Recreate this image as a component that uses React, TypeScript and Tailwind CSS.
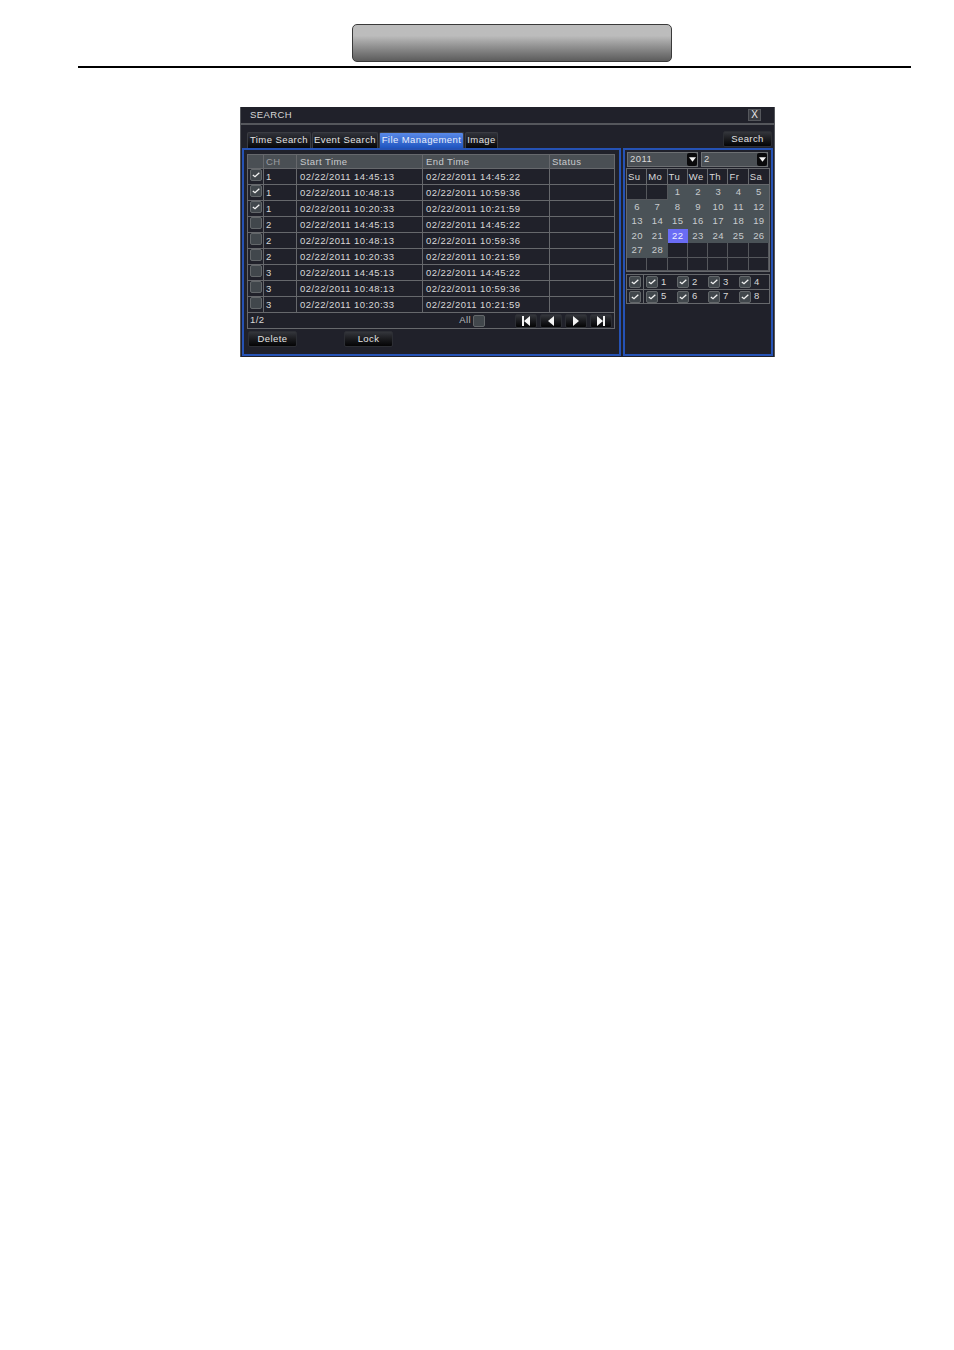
const font = "font-['Liberation_Sans',Arial,sans-serif]";

const rows = [
  ["1", "02/22/2011 14:45:13", "02/22/2011 14:45:22", true],
  ["1", "02/22/2011 10:48:13", "02/22/2011 10:59:36", true],
  ["1", "02/22/2011 10:20:33", "02/22/2011 10:21:59", true],
  ["2", "02/22/2011 14:45:13", "02/22/2011 14:45:22", false],
  ["2", "02/22/2011 10:48:13", "02/22/2011 10:59:36", false],
  ["2", "02/22/2011 10:20:33", "02/22/2011 10:21:59", false],
  ["3", "02/22/2011 14:45:13", "02/22/2011 14:45:22", false],
  ["3", "02/22/2011 10:48:13", "02/22/2011 10:59:36", false],
  ["3", "02/22/2011 10:20:33", "02/22/2011 10:21:59", false],
] as const;

const weeks: (number | null)[][] = [
  [null, null, 1, 2, 3, 4, 5],
  [6, 7, 8, 9, 10, 11, 12],
  [13, 14, 15, 16, 17, 18, 19],
  [20, 21, 22, 23, 24, 25, 26],
  [27, 28, null, null, null, null, null],
  [null, null, null, null, null, null, null],
];

function Check({ on }: { on: boolean }) {
  return (
    <span className="flex h-[12px] w-[12px] shrink-0 items-center justify-center rounded-[2px] border border-[#63676a] bg-[#41474c]">
      {on && (
        <svg viewBox="0 0 12 12" className="h-[10px] w-[10px]">
          <path d="M2.2 6 L4.8 8 L10 3.4" fill="none" stroke="#f2f2f2" strokeWidth="1.6" />
        </svg>
      )}
    </span>
  );
}

function Tab({ label, w, active }: { label: string; w: string; active?: boolean }) {
  return (
    <div
      className={`flex h-[16px] items-center justify-center rounded-t-[2px] border border-b-0 border-[#3a3c42] text-[9.5px] tracking-[0.42px] ${w} ${
        active
          ? "bg-gradient-to-b from-[#5a8ae8] to-[#1f55c0] text-[#e8eefc]"
          : "bg-gradient-to-b from-[#30323a] to-[#08080a] text-[#e2e2e2]"
      }`}
    >
      {label}
    </div>
  );
}

function Btn({ label, w, h }: { label: string; w: string; h: string }) {
  return (
    <div
      className={`flex items-center justify-center rounded-[2px] border border-[#2c2e34] bg-gradient-to-b from-[#34363c] to-[#050506] text-[9.5px] tracking-[0.42px] text-[#e2e2e2] ${w} ${h}`}
    >
      {label}
    </div>
  );
}

function Nav({ d, w }: { d: string; w: string }) {
  return (
    <div className={`flex h-[14px] items-center justify-center rounded-[2px] border border-[#2c2e34] bg-gradient-to-b from-[#34363c] to-[#050506] ${w}`}>
      <svg viewBox="0 0 12 10" className="h-[10px] w-[12px]">
        <path d={d} fill="#f4f4f4" />
      </svg>
    </div>
  );
}

function Select({ label, w }: { label: string; w: string }) {
  return (
    <div className={`flex h-[15px] items-center justify-between border border-[#6d7073] bg-[#4a4f54] pl-[2px] ${w}`}>
      <span className="text-[9.5px] tracking-[0.42px] text-[#d8d8d8]">{label}</span>
      <span className="flex h-[13px] w-[10px] items-center justify-center rounded-[2px] bg-[#0a0a0c]">
        <svg viewBox="0 0 8 5" className="h-[5px] w-[7px]">
          <path d="M0 0 H8 L4 5 Z" fill="#f4f4f4" />
        </svg>
      </span>
    </div>
  );
}

export default function App() {
  return (
    <div className={`${font} h-[1350px] w-[954px] bg-white pt-[24px]`}>
      <div className="ml-[352px] h-[38px] w-[320px] rounded-[5px] border border-[#3a3a3a] bg-gradient-to-b from-[#bcbcbc] from-30% to-[#5c5c5c]" />
      <div className="ml-[78px] mt-[4px] h-[2px] w-[833px] bg-black" />

      <div className="ml-[240px] mt-[39px] h-[250px] w-[535px] border-l border-r border-[#55575c] bg-[#20212a]">
        <div className="flex h-[18px] items-center justify-between border-b-2 border-[#55575c] pl-[9px] pr-[13px]">
          <span className="text-[9.5px] tracking-[0.42px] text-[#d8d8d8]">SEARCH</span>
          <span className="flex h-[12px] w-[13px] items-center justify-center border border-[#55575c] bg-[#3a3c42] text-[10px] leading-none text-[#e8e8e8]">
            X
          </span>
        </div>

        <div className="flex h-[23px] items-end justify-between pl-[6px] pr-[2px]">
          <div className="flex gap-[1px]">
            <Tab label="Time Search" w="w-[64px]" />
            <Tab label="Event Search" w="w-[66px]" />
            <Tab label="File Management" w="w-[85px]" active />
            <Tab label="Image" w="w-[33px]" />
          </div>
          <div className="mb-[1px]">
            <Btn label="Search" w="w-[49px]" h="h-[16px]" />
          </div>
        </div>

        <div className="flex gap-[2px] pl-[1px]">
          <div className="h-[208px] w-[379px] border-2 border-[#2552b5] pl-[3px] pt-[4px]">
            <div className="w-[368px] border border-[#66686c] text-[9.5px] tracking-[0.42px] text-[#d8d8d8]">
              <div className="grid h-[13px] grid-cols-[16px_33px_126px_127px_1fr] items-stretch bg-[#4a4f54] leading-[13px] text-[#c8cacc]">
                <div className="border-r border-[#66686c]" />
                <div className="border-r border-[#66686c] pl-[2px] text-[#9a9da0]">CH</div>
                <div className="border-r border-[#66686c] pl-[3px]">Start Time</div>
                <div className="border-r border-[#66686c] pl-[3px]">End Time</div>
                <div className="pl-[2px]">Status</div>
              </div>
              {rows.map((r, i) => (
                <div key={i} className="grid h-[16px] grid-cols-[16px_33px_126px_127px_1fr] border-t border-[#66686c] leading-[15px]">
                  <div className="flex items-start justify-center border-r border-[#66686c]">
                    <Check on={r[3]} />
                  </div>
                  <div className="border-r border-[#66686c] pl-[2px]">{r[0]}</div>
                  <div className="border-r border-[#66686c] pl-[3px]">{r[1]}</div>
                  <div className="border-r border-[#66686c] pl-[3px]">{r[2]}</div>
                  <div />
                </div>
              ))}
              <div className="flex h-[16px] items-center justify-between border-t border-[#66686c] pl-[2px] pr-[2px]">
                <span>1/2</span>
                <div className="flex items-center">
                  <span className="text-[#b8babc]">All</span>
                  <span className="ml-[2px] mr-[30px]">
                    <Check on={false} />
                  </span>
                  <div className="flex gap-[3px]">
                    <Nav w="w-[22px]" d="M2 0 H4 V10 H2 Z M10 0 V10 L4 5 Z" />
                    <Nav w="w-[22px]" d="M9 0 V10 L3 5 Z" />
                    <Nav w="w-[22px]" d="M3 0 V10 L9 5 Z" />
                    <Nav w="w-[22px]" d="M2 0 V10 L8 5 Z M8 0 H10 V10 H8 Z" />
                  </div>
                </div>
              </div>
            </div>
            <div className="mt-[2px] flex gap-[47px] pl-[1px]">
              <Btn label="Delete" w="w-[49px]" h="h-[16px]" />
              <Btn label="Lock" w="w-[49px]" h="h-[16px]" />
            </div>
          </div>

          <div className="h-[208px] w-[150px] border-2 border-[#2552b5] pl-[1px] pt-[2px]">
            <div className="flex gap-[3px] pl-[1px]">
              <Select label="2011" w="w-[71px]" />
              <Select label="2" w="w-[67px]" />
            </div>
            <div className="mt-[1px] w-[144px] text-[9.5px] tracking-[0.42px] text-[#d8d8d8]">
              <div className="grid h-[16px] grid-cols-7 border border-b-0 border-[#66686c]">
                {["Su", "Mo", "Tu", "We", "Th", "Fr", "Sa"].map((d, i) => (
                  <div key={d} className={`pl-[1px] leading-[15px] ${i < 6 ? "border-r border-[#66686c]" : ""}`}>
                    {d}
                  </div>
                ))}
              </div>
              <div className="border border-[#66686c]">
                {weeks.map((w, i) => (
                  <div key={i} className={`grid grid-cols-7 ${i === 5 ? "h-[13.5px]" : "h-[14.5px]"}`}>
                    {w.map((d, j) => (
                      <div
                        key={j}
                        className={`flex items-center justify-center pb-[1px] leading-none ${
                          d === 22
                            ? "bg-[#6a6cf5] text-[#eeeeff]"
                            : d
                              ? "bg-[#4a5257] text-[#c8ccce]"
                              : "border-b border-r border-[#55575c]"
                        }`}
                      >
                        {d}
                      </div>
                    ))}
                  </div>
                ))}
              </div>
              <div className="mt-[2px] border border-[#66686c]">
                {[[1, 2, 3, 4], [5, 6, 7, 8]].map((g, i) => (
                  <div key={i} className={`flex h-[14px] items-center ${i ? "border-t border-[#66686c]" : ""}`}>
                    <div className="flex h-full w-[17px] items-center justify-center border-r border-[#66686c]">
                      <Check on />
                    </div>
                    {g.map((n) => (
                      <div key={n} className="ml-[2px] flex w-[29px] items-center gap-[3px]">
                        <Check on />
                        <span>{n}</span>
                      </div>
                    ))}
                  </div>
                ))}
              </div>
            </div>
          </div>
        </div>
      </div>
    </div>
  );
}
